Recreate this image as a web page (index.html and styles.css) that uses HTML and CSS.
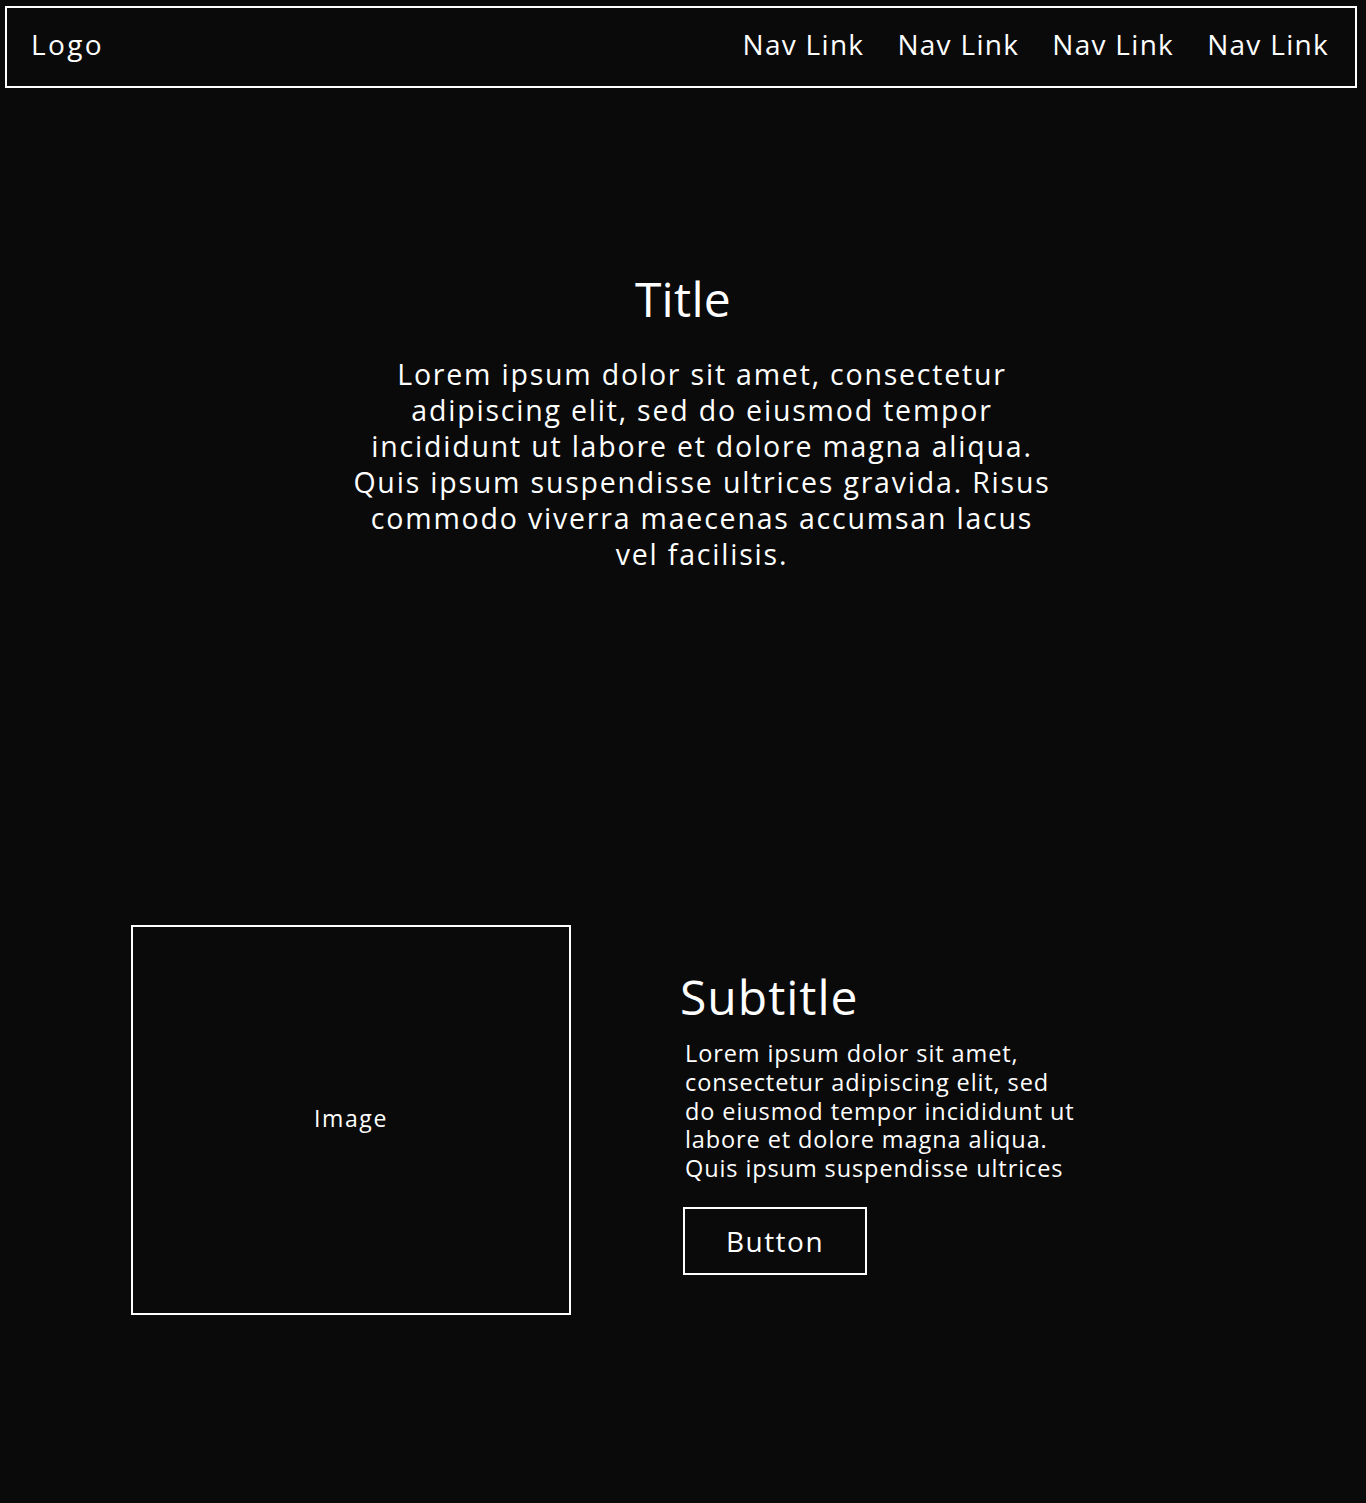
FILE: index.html
```html
<!DOCTYPE html>
<html lang="en">
<head>
<meta charset="utf-8">
<title>Wireframe</title>
<link rel="stylesheet" href="styles.css">
</head>
<body>
<header class="nav">
  <div class="logo">Logo</div>
  <nav class="links">
    <a class="link" href="#">Nav Link</a>
    <a class="link" href="#">Nav Link</a>
    <a class="link" href="#">Nav Link</a>
    <a class="link" href="#">Nav Link</a>
  </nav>
</header>
<section class="hero">
  <h1 class="title">Title</h1>
  <p class="lead">Lorem ipsum dolor sit amet, consectetur adipiscing elit, sed do eiusmod tempor incididunt ut labore et dolore magna aliqua. Quis ipsum suspendisse ultrices gravida. Risus commodo viverra maecenas accumsan lacus vel facilisis.</p>
</section>
<section class="feature">
  <div class="image">Image</div>
  <div class="copy">
    <h2 class="subtitle">Subtitle</h2>
    <p class="text">Lorem ipsum dolor sit amet, consectetur adipiscing elit, sed do eiusmod tempor incididunt ut labore et dolore magna aliqua. Quis ipsum suspendisse ultrices</p>
    <a class="button" href="#">Button</a>
  </div>
</section>
</body>
</html>
```
FILE: styles.css
```css
html, body {
  background: #0a0a0a;
}
body {
  margin: 0;
  padding: 6px 9px 0 5px;
  color: #ffffff;
  font-family: "Open Sans", "Noto Sans", sans-serif;
  min-height: 1503px;
  box-sizing: border-box;
}
.nav {
  display: flex;
  align-items: center;
  justify-content: space-between;
  height: 82px;
  box-sizing: border-box;
  border: 2px solid #ffffff;
  padding: 0 26px 6px 24px;
}
.logo {
  font-size: 28px;
  letter-spacing: 2.4px;
}
.links {
  display: flex;
  gap: 33px;
}
.link {
  color: #ffffff;
  text-decoration: none;
  font-size: 28px;
  letter-spacing: 1.3px;
}
.hero {
  padding-top: 183px;
  height: 837px;
  box-sizing: border-box;
}
.title {
  margin: 0;
  padding-left: 4px;
  text-align: center;
  font-size: 48px;
  font-weight: 400;
  line-height: 56px;
  letter-spacing: 0.3px;
}
.lead {
  margin: 29px 0 0 346px;
  width: 702px;
  text-align: center;
  font-size: 28.5px;
  line-height: 36px;
  letter-spacing: 1.8px;
}
.feature {
  display: flex;
  align-items: flex-start;
  padding-left: 126px;
  gap: 109px;
}
.image {
  width: 440px;
  height: 390px;
  box-sizing: border-box;
  border: 2px solid #ffffff;
  display: flex;
  align-items: center;
  justify-content: center;
  padding-bottom: 4px;
  font-size: 23px;
  letter-spacing: 1.6px;
}
.copy {
  padding-top: 44px;
  width: 410px;
}
.subtitle {
  margin: 0;
  font-size: 48px;
  font-weight: 400;
  line-height: 56px;
  letter-spacing: 1px;
}
.text {
  margin: 14px 0 0 5px;
  width: 396px;
  font-size: 23.5px;
  line-height: 28.8px;
  letter-spacing: 0.9px;
}
.button {
  display: inline-flex;
  align-items: center;
  justify-content: center;
  margin: 24px 0 0 3px;
  width: 184px;
  height: 68px;
  box-sizing: border-box;
  border: 2px solid #ffffff;
  color: #ffffff;
  text-decoration: none;
  font-size: 28px;
  letter-spacing: 1.5px;
}
```
